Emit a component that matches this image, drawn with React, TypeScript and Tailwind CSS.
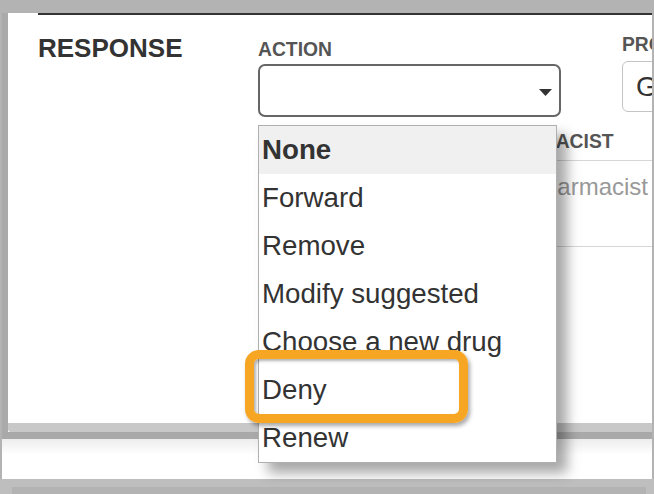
const items = [
  "None",
  "Forward",
  "Remove",
  "Modify suggested",
  "Choose a new drug",
  "Deny",
  "Renew",
];

function ActionSelect() {
  return (
    <div className="relative mt-[5px]">
      <div className="relative h-[53px] w-[303px] rounded-[7px] border-2 border-[#666] bg-white">
        <svg
          className="absolute right-[7px] top-[23px]"
          width="13"
          height="7"
          viewBox="0 0 13 7"
        >
          <path d="M0 0h13L6.5 7z" fill="#333" />
        </svg>
      </div>

      <div className="absolute left-0 top-[61px] z-10 w-[299px] border border-[#b0b0b0] bg-white shadow-[10px_10px_12px_rgba(0,0,0,0.35)]">
        {items.map((item, i) => (
          <div
            className={`h-[48px] pl-[3px] text-[27.7px] leading-[48px] text-[#333] ${
              i === 0 ? "bg-[#f0f0f0] font-bold" : ""
            }`}
            key={item}
          >
            {item}
          </div>
        ))}

        <div className="absolute left-[-14px] top-[224px] h-[73px] w-[223px] rounded-[14px] border-[9px] border-[#f7a623] shadow-[2px_3px_4px_rgba(0,0,0,0.35),inset_2px_2px_3px_rgba(0,0,0,0.3)]" />
      </div>
    </div>
  );
}

export default function App() {
  return (
    <div className="flex h-[494px] w-[654px] flex-col overflow-hidden bg-[#b3b3b3] font-['Liberation_Sans',Arial,sans-serif]">
      <div className="px-[2px] pt-[2px]">
        <div className="border-l-[6px] border-[#aaaaaa] bg-white">
          <div className="h-[410px] pl-[30px]">
            <div className="mt-[11px] h-[2px] bg-[#333]" />

            <div className="flex">
              <div className="w-[220px] pt-[20px]">
                <h2 className="text-[26px] font-bold leading-[26px] text-[#333]">
                  RESPONSE
                </h2>
              </div>

              <div className="w-[303px] pt-[25px]">
                <p className="text-[19.3px] font-bold leading-[19px] text-[#555]">
                  ACTION
                </p>
                <ActionSelect />
              </div>

              <div className="ml-[61px] w-[30px] overflow-hidden pt-[20px]">
                <p className="w-[200px] text-[19.3px] font-bold leading-[19px] text-[#555]">
                  PROVIDER
                </p>
                <div className="mt-[7px] h-[51px] w-[200px] rounded-[6px] border border-[#c4c4c4] pl-[13px] text-[27.7px] leading-[49px] text-[#333]">
                  Generic
                </div>
              </div>
            </div>

            <div className="ml-[447px] mt-[15px]">
              <p className="text-[19.3px] font-bold leading-[19px] text-[#555]">
                PHARMACIST
              </p>
              <div className="mt-[9px] h-[87px] w-[167px] border border-r-0 border-[#d6d6d6] pl-[42px] pt-[12px] text-[24px] leading-[28px] text-[#999]">
                Pharmacist
              </div>
            </div>
          </div>
          <div className="h-[9px] rounded-bl-[3px] bg-[#c8c8c8]" />
        </div>
        <div className="h-[7px] bg-[#a9a9a9]" />
        <div className="h-[40px] bg-gradient-to-b from-[#ededed] to-white to-40%" />
      </div>

      <div className="h-[8px] bg-[#bebebe]" />
      <div className="flex flex-1">
        <div className="w-[12px] bg-[#bebebe]" />
        <div className="flex-1" />
        <div className="w-[8px] bg-[#bebebe]" />
      </div>
    </div>
  );
}
